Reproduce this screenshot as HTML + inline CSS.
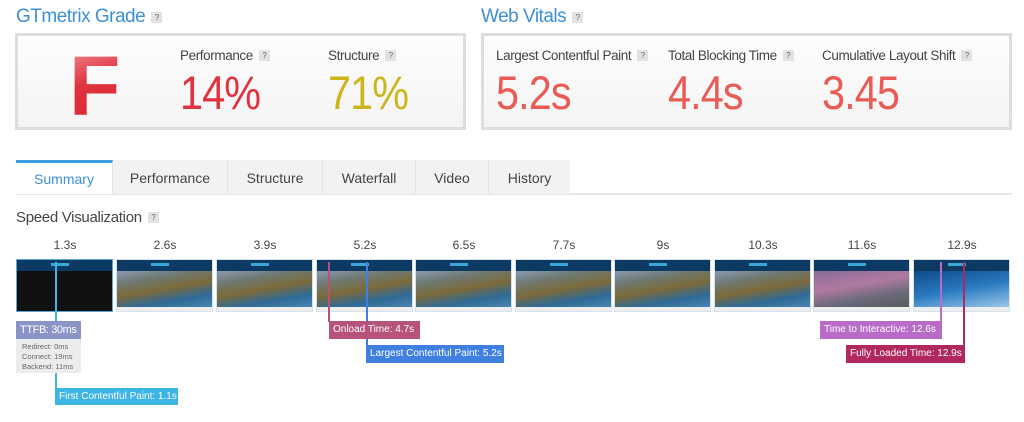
<!DOCTYPE html><html><head><style>
body{margin:0;width:1024px;height:422px;background:#fff;font-family:"Liberation Sans",sans-serif;position:relative;overflow:hidden}
.a{position:absolute}
.h{color:#3d8fd6;font-size:19px;letter-spacing:-.5px}
.q{display:inline-block;width:11px;height:11px;background:#e2e2e2;color:#666;font-size:8px;text-align:center;line-height:11px;vertical-align:2px;margin-left:6px}
.box{border:3px solid #ddd;background:#fafafa;box-sizing:border-box}
.cell{position:absolute;top:0;bottom:0;border-right:1px solid #e2e2e2;background:linear-gradient(#fdfdfd,#f4f4f4)}
.lab{position:absolute;left:12px;top:12px;font-size:13.5px;color:#444;white-space:nowrap;letter-spacing:-.4px}
.big{position:absolute;left:12px;top:29px;font-size:47px;letter-spacing:-1px;transform:scaleX(.88);transform-origin:left}
.tab{position:absolute;top:160px;height:34px;background:#f2f2f2;border-right:1px solid #e4e4e4;font-size:14px;color:#444;text-align:center;line-height:36px;box-sizing:border-box}
.t{position:absolute;top:238px;font-size:12px;color:#444;width:60px;text-align:center}
.f{position:absolute;top:259px;width:97px;height:53px;background:#eee;border:1px solid #d6e2ec;box-sizing:border-box;overflow:hidden}
.f i{position:absolute;left:0;right:0;top:0;height:11px;background:#0c3a62}
.f b{position:absolute;left:0;right:0;top:11px;height:36px;background:linear-gradient(170deg,#8a9ab0 0%,#6e7a74 25%,#7c6a3a 50%,#2f6a95 75%,#4a86b4)}
.f u{position:absolute;left:34px;top:3px;width:18px;height:3px;background:#3aa7d8}
.l{position:absolute;width:2px}
.m{position:absolute;height:18px;color:#fff;font-size:10px;line-height:18px;padding:0 4px;box-sizing:border-box;white-space:nowrap;overflow:hidden}
</style></head><body>
<div class="a h" style="left:16px;top:6px">GTmetrix Grade<span class="q">?</span></div>
<div class="a h" style="left:481px;top:6px">Web Vitals<span class="q">?</span></div>
<div class="a box" style="left:15px;top:33px;width:451px;height:97px">
 <div class="cell" style="left:0;width:150px"><div class="a" style="left:51px;top:2px;font-size:84px;font-weight:bold;color:#e0333f;background:linear-gradient(160deg,#f3a0a4,#e0333f 45%,#d8202e);-webkit-background-clip:text;background-clip:text;-webkit-text-fill-color:transparent">F</div></div>
 <div class="cell" style="left:150px;width:148px"><div class="lab">Performance<span class="q">?</span></div><div class="big" style="color:#e0333f">14%</div></div>
 <div class="cell" style="left:298px;width:147px;border:0"><div class="lab">Structure<span class="q">?</span></div><div class="big" style="color:#cdb51c">71%</div></div>
</div>
<div class="a box" style="left:481px;top:33px;width:531px;height:97px">
 <div class="cell" style="left:0;width:172px"><div class="lab">Largest Contentful Paint<span class="q">?</span></div><div class="big" style="color:#e85c55">5.2s</div></div>
 <div class="cell" style="left:172px;width:154px"><div class="lab">Total Blocking Time<span class="q">?</span></div><div class="big" style="color:#e85c55">4.4s</div></div>
 <div class="cell" style="left:326px;width:199px;border:0"><div class="lab">Cumulative Layout Shift<span class="q">?</span></div><div class="big" style="color:#e85c55">3.45</div></div>
</div>
<div class="a" style="left:16px;top:193px;width:996px;height:2px;background:#e6e6e6"></div>
<div class="tab" style="left:16px;width:97px;background:#fff;border-top:3px solid #3d9ee0;color:#3d8fd6;line-height:33px">Summary</div>
<div class="tab" style="left:113px;width:115px">Performance</div>
<div class="tab" style="left:228px;width:95px">Structure</div>
<div class="tab" style="left:323px;width:93px">Waterfall</div>
<div class="tab" style="left:416px;width:73px">Video</div>
<div class="tab" style="left:489px;width:81px;border:0">History</div>
<div class="a" style="left:16px;top:209px;font-size:15px;color:#444;letter-spacing:-.3px">Speed Visualization<span class="q">?</span></div>
<div class="t" style="left:35px">1.3s</div><div class="t" style="left:135px">2.6s</div><div class="t" style="left:235px">3.9s</div><div class="t" style="left:335px">5.2s</div><div class="t" style="left:434px">6.5s</div><div class="t" style="left:534px">7.7s</div><div class="t" style="left:633px">9s</div><div class="t" style="left:733px">10.3s</div><div class="t" style="left:832px">11.6s</div><div class="t" style="left:932px">12.9s</div>
<div class="f" style="left:16px;background:#111;border-color:#5aa8d8"><i></i><u></u></div>
<div class="f" style="left:116px"><i></i><b></b><u></u></div>
<div class="f" style="left:216px"><i></i><b></b><u></u></div>
<div class="f" style="left:316px"><i></i><b></b><u></u></div>
<div class="f" style="left:415px"><i></i><b></b><u></u></div>
<div class="f" style="left:515px"><i></i><b></b><u></u></div>
<div class="f" style="left:614px"><i></i><b></b><u></u></div>
<div class="f" style="left:714px"><i></i><b></b><u></u></div>
<div class="f" style="left:813px"><i></i><b style="background:linear-gradient(170deg,#8a6a9a,#b07aa0 40%,#6a6a7a 70%,#5a5a60)"></b><u></u></div>
<div class="f" style="left:913px"><i></i><b style="background:linear-gradient(170deg,#0e4a8a,#2a7ac0 50%,#9ac8e8)"></b><u></u></div>
<div class="l" style="left:55px;top:262px;height:128px;background:#3cb4e6"></div>
<div class="l" style="left:328px;top:262px;height:60px;background:#b5537a"></div>
<div class="l" style="left:366px;top:262px;height:84px;background:#3f7fe0"></div>
<div class="l" style="left:940px;top:262px;height:60px;background:#b86cc8"></div>
<div class="l" style="left:963px;top:262px;height:84px;background:#b0285e"></div>
<div class="m" style="left:16px;top:321px;width:65px;background:#8a94c6;font-size:11px;letter-spacing:-.4px">TTFB: 30ms</div>
<div class="a" style="left:16px;top:339px;width:65px;height:34px;background:#ececec;font-size:7.5px;color:#666;line-height:10px;padding:3px 6px;box-sizing:border-box">Redirect: 0ms<br>Connect: 19ms<br>Backend: 11ms</div>
<div class="m" style="left:55px;top:388px;width:123px;background:#3cb4e6;height:17px">First Contentful Paint: 1.1s</div>
<div class="m" style="left:329px;top:321px;width:91px;background:#b5537a">Onload Time: 4.7s</div>
<div class="m" style="left:366px;top:345px;width:138px;background:#3f7fe0">Largest Contentful Paint: 5.2s</div>
<div class="m" style="left:820px;top:321px;width:122px;background:#b86cc8">Time to Interactive: 12.6s</div>
<div class="m" style="left:846px;top:345px;width:119px;background:#b0285e">Fully Loaded Time: 12.9s</div>
</body></html>
